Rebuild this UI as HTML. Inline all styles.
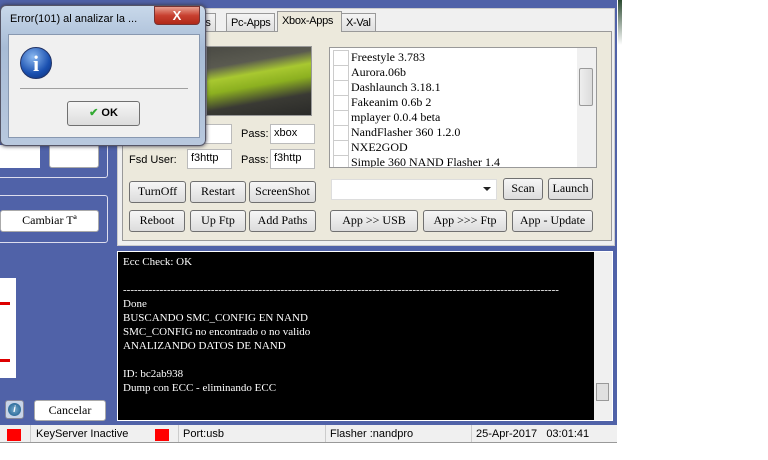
<!DOCTYPE html>
<html><head><meta charset="utf-8"><style>
*{box-sizing:border-box;margin:0;padding:0}
body{width:768px;height:460px;background:#fff;position:relative;overflow:hidden;font-family:"Liberation Sans",sans-serif;font-size:11px;color:#000}
.a{position:absolute;white-space:nowrap}
.serif{font-family:"Liberation Serif",serif;font-size:12px}
.btn{position:absolute;white-space:nowrap;border:1px solid #707070;border-radius:3px;background:linear-gradient(#f6f6f6,#dcdcdc);text-align:center;font-family:"Liberation Serif",serif;font-size:12px;line-height:19px}
.tb{position:absolute;background:#fff;border:1px solid #bbb;font-size:11px;padding:2px 3px}
.tab{position:absolute;white-space:nowrap;top:13px;height:19px;border:1px solid #999;border-bottom:none;background:linear-gradient(#f4f4f4,#dedede);font-size:11px;padding:3px 4px 0;letter-spacing:-0.3px}
.li{position:absolute;left:3px;height:15px;font-family:"Liberation Serif",serif;font-size:12px;line-height:15px;padding-left:18px;white-space:nowrap}
.li:before{content:"";position:absolute;left:0;top:0;width:14px;height:14px;border:1px solid #ccc;background:#fff}
</style></head><body>
<div class="a" style="left:0;top:0;width:617px;height:426px;background:#5062a8"></div>
<div class="a" style="left:618px;top:0;width:4px;height:45px;background:linear-gradient(#2a4a30,#fff)"></div>
<!-- left widgets -->
<div class="a" style="left:-4px;top:130px;width:112px;height:48px;border:1px solid #dde;border-radius:3px"></div>
<div class="a" style="left:0;top:145px;width:40px;height:23px;background:#fff"></div>
<div class="btn" style="left:49px;top:135px;width:50px;height:33px;background:#fff;border-color:#aaa"></div>
<div class="a" style="left:-4px;top:195px;width:112px;height:48px;border:1px solid #dde;border-radius:3px"></div>
<div class="btn" style="left:0;top:210px;width:99px;height:22px;background:#fff;border-color:#aaa">Cambiar Tª</div>
<div class="a" style="left:0;top:278px;width:16px;height:100px;background:#fff"></div>
<div class="a" style="left:0;top:302px;width:10px;height:3px;background:#d00"></div>
<div class="a" style="left:0;top:359px;width:10px;height:3px;background:#d00"></div>
<div class="a" style="left:5px;top:400px;width:19px;height:19px;border-radius:3px;background:#c8d4e8;border:1px solid #889"></div>
<div class="a" style="left:8px;top:403px;width:13px;height:13px;border-radius:50%;background:radial-gradient(#7ac,#158);color:#fff;font-size:9px;text-align:center;line-height:13px;font-style:italic;font-weight:bold">i</div>
<div class="btn" style="left:34px;top:400px;width:72px;height:21px;background:#fff;border-color:#aaa">Cancelar</div>
<!-- tab panel -->
<div class="a" style="left:117px;top:8px;width:498px;height:238px;background:#f0f0f0;border:1px solid #ccc"></div>
<div class="tab" style="left:190px">cks</div>
<div class="tab" style="left:226px">Pc-Apps</div>
<div class="tab" style="left:341px">X-Val</div>
<div class="a" style="left:122px;top:31px;width:490px;height:210px;background:#ece9dc;border:1px solid #999"></div>
<div class="a" style="left:277px;top:11px;width:65px;height:21px;background:#ece9dc;border:1px solid #999;border-bottom:none;padding:3px 4px;font-size:11px;letter-spacing:-0.3px">Xbox-Apps</div>
<div class="a" style="left:206px;top:46px;width:106px;height:70px;border:1px solid #999;background:linear-gradient(170deg,#4a4a44 0%,#5a5a50 25%,#a8c830 40%,#8cb020 55%,#3a3a34 75%,#2a2a28 100%)"></div>
<div class="tb" style="left:187px;top:124px;width:45px;height:20px">x</div>
<div class="a" style="left:241px;top:128px;font-size:11px">Pass:</div>
<div class="tb" style="left:270px;top:124px;width:45px;height:20px">xbox</div>
<div class="a" style="left:129px;top:154px;font-size:11px">Fsd User:</div>
<div class="tb" style="left:187px;top:149px;width:45px;height:20px">f3http</div>
<div class="a" style="left:241px;top:154px;font-size:11px">Pass:</div>
<div class="tb" style="left:270px;top:149px;width:45px;height:20px">f3http</div>
<div class="btn" style="left:129px;top:181px;width:57px;height:22px">TurnOff</div>
<div class="btn" style="left:190px;top:181px;width:56px;height:22px">Restart</div>
<div class="btn" style="left:249px;top:181px;width:67px;height:22px">ScreenShot</div>
<div class="btn" style="left:129px;top:210px;width:56px;height:22px">Reboot</div>
<div class="btn" style="left:190px;top:210px;width:56px;height:22px">Up Ftp</div>
<div class="btn" style="left:249px;top:210px;width:67px;height:22px">Add Paths</div>
<div class="a" style="left:329px;top:47px;width:268px;height:121px;background:#fff;border:1px solid #999;overflow:hidden">
<div class="li" style="top:2px">Freestyle 3.783</div>
<div class="li" style="top:17px">Aurora.06b</div>
<div class="li" style="top:32px">Dashlaunch 3.18.1</div>
<div class="li" style="top:47px">Fakeanim 0.6b 2</div>
<div class="li" style="top:62px">mplayer 0.0.4 beta</div>
<div class="li" style="top:77px">NandFlasher 360 1.2.0</div>
<div class="li" style="top:92px">NXE2GOD</div>
<div class="li" style="top:107px">Simple 360 NAND Flasher 1.4</div>
<div class="a" style="left:247px;top:0;width:20px;height:121px;background:#f0f0f0"></div>
<div class="a" style="left:249px;top:20px;width:14px;height:38px;background:linear-gradient(90deg,#eee,#dcdcdc);border:1px solid #999;border-radius:2px"></div>
</div>
<div class="a" style="left:331px;top:179px;width:166px;height:21px;background:#fff;border:1px solid #ddd"></div>
<div class="a" style="left:483px;top:187px;border:4px solid transparent;border-top:4px solid #222"></div>
<div class="btn" style="left:503px;top:178px;width:40px;height:22px">Scan</div>
<div class="btn" style="left:548px;top:178px;width:45px;height:22px">Launch</div>
<div class="btn" style="left:330px;top:210px;width:88px;height:22px">App &gt;&gt; USB</div>
<div class="btn" style="left:423px;top:210px;width:84px;height:22px">App &gt;&gt;&gt; Ftp</div>
<div class="btn" style="left:512px;top:210px;width:81px;height:22px">App - Update</div>
<!-- console -->
<div class="a serif" style="left:117px;top:251px;width:496px;height:170px;background:#000;border:1px solid #fff;color:#fff;font-size:11px;line-height:14px;padding:3px 5px;white-space:normal">Ecc Check: OK<br><br><div style="height:14px;overflow:hidden;width:440px">-----------------------------------------------------------------------------------------------------------------------</div>Done<br>BUSCANDO SMC_CONFIG EN NAND<br>SMC_CONFIG no encontrado o no valido<br>ANALIZANDO DATOS DE NAND<br><br>ID: bc2ab938<br>Dump con ECC - eliminando ECC</div>
<div class="a" style="left:594px;top:252px;width:18px;height:168px;background:#f0f0f0"></div>
<div class="a" style="left:596px;top:383px;width:13px;height:18px;background:#e0e0e0;border:1px solid #999"></div>
<!-- status bar -->
<div class="a" style="left:0;top:425px;width:617px;height:18px;background:#f0f0f0;border-bottom:1px solid #999;font-size:11px">
<div class="a" style="left:7px;top:4px;width:14px;height:12px;background:#f00"></div>
<div class="a" style="left:30px;top:0;height:17px;border-left:1px solid #ccc"></div>
<div class="a" style="left:36px;top:3px">KeyServer Inactive</div>
<div class="a" style="left:155px;top:4px;width:14px;height:12px;background:#f00"></div>
<div class="a" style="left:178px;top:0;height:17px;border-left:1px solid #ccc"></div>
<div class="a" style="left:183px;top:3px">Port:usb</div>
<div class="a" style="left:325px;top:0;height:17px;border-left:1px solid #ccc"></div>
<div class="a" style="left:330px;top:3px">Flasher :nandpro</div>
<div class="a" style="left:471px;top:0;height:17px;border-left:1px solid #ccc"></div>
<div class="a" style="left:476px;top:3px">25-Apr-2017&nbsp;&nbsp;&nbsp;03:01:41</div>
</div>
<!-- dialog -->
<div class="a" style="left:0;top:5px;width:206px;height:141px;border:1px solid #556;border-radius:6px;background:linear-gradient(#c8d8ea,#a8bcd6 30%,#b8c8de);box-shadow:0 0 4px #334"></div>
<div class="a" style="left:10px;top:13px;font-size:11px;color:#000">Error(101) al analizar la ...</div>
<div class="a" style="left:154px;top:6px;width:46px;height:19px;border:1px solid #733;border-radius:0 0 4px 4px;background:linear-gradient(#e8a090,#c84030 50%,#b02818);color:#fff;font-weight:bold;text-align:center;font-size:13px;line-height:17px">X</div>
<div class="a" style="left:8px;top:34px;width:192px;height:104px;background:#f0f0f0;border:1px solid #8898b0"></div>
<div class="a" style="left:20px;top:47px;width:32px;height:32px;border-radius:50%;background:radial-gradient(circle at 40% 30%,#8ab8f0,#1a50b0 60%,#0a2a70);border:1px solid #236;color:#fff;font-family:'Liberation Serif',serif;font-weight:bold;font-size:22px;text-align:center;line-height:31px">i</div>
<div class="a" style="left:20px;top:88px;width:168px;height:1px;background:#a0a0a0"></div>
<div class="btn" style="left:67px;top:101px;width:73px;height:25px;font-family:'Liberation Sans',sans-serif;font-weight:bold;font-size:11px;line-height:23px"><span style="color:#3a3">✔</span> OK</div>
</body></html>
